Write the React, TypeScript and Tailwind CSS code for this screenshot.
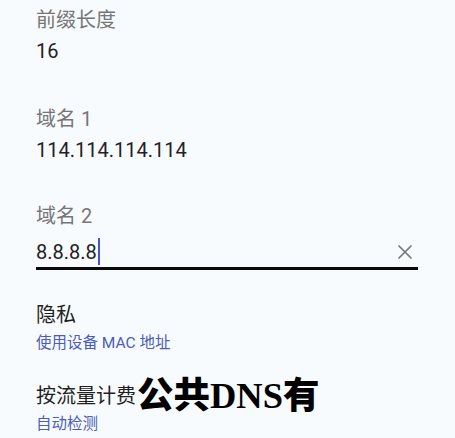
import React from "react";

const sans = "font-['Roboto','Noto_Sans_CJK_SC',sans-serif]";

function Field({ label, value, className = "" }: { label: string; value: string; className?: string }) {
  return (
    <div className={className}>
      <div className="text-[20px] leading-[24px] text-[#767676]">{label}</div>
      <div className="mt-[7px] text-[20px] leading-[24px] text-[#222222]">{value}</div>
    </div>
  );
}

function Setting({ title, summary, className = "" }: { title: string; summary: string; className?: string }) {
  return (
    <div className={className}>
      <div className="text-[20px] leading-[24px] text-[#1f1f1f]">{title}</div>
      <div className="mt-[6px] text-[15.5px] leading-[20px] text-[#4a5cc0]">{summary}</div>
    </div>
  );
}

export default function App() {
  return (
    <div className={`relative w-[455px] h-[438px] overflow-hidden bg-[#f8fbfd] ${sans}`}>
      <div className="px-[36px] pt-[8px]">
        <Field label="前缀长度" value="16" />
        <Field label="域名 1" value="114.114.114.114" className="mt-[44px]" />

        <div className="mt-[42px]">
          <div className="text-[20px] leading-[24px] text-[#767676]">域名 2</div>
          <div className="mt-[8px] flex items-center h-[31px] w-[382px]">
            <div className="flex-1 flex items-center text-[20px] leading-[24px] text-[#222222]">
              <span>8.8.8.8</span>
              <span className="ml-[1px] inline-block w-[2px] h-[27px] bg-[#4b52c6]" />
            </div>
            <svg width="16" height="16" viewBox="0 0 16 16" className="mr-[5px]" fill="none">
              <path d="M2 2L14 14M14 2L2 14" stroke="#777777" strokeWidth="1.7" strokeLinecap="round" />
            </svg>
          </div>
          <div className="w-[382px] h-[2.5px] bg-[#0a0a0a]" />
        </div>

        <Setting title="隐私" summary="使用设备 MAC 地址" className="mt-[33px]" />
        <Setting title="按流量计费" summary="自动检测" className="mt-[31px]" />
      </div>

      <div className="absolute left-[137px] top-[371px] flex items-baseline text-[36.5px] leading-[44px] text-black">
        <span className="font-['Noto_Sans_CJK_SC',sans-serif] font-black">公共</span>
        <span className="font-['Liberation_Serif',serif] font-bold">DNS</span>
        <span className="font-['Noto_Sans_CJK_SC',sans-serif] font-black">有</span>
      </div>
    </div>
  );
}
